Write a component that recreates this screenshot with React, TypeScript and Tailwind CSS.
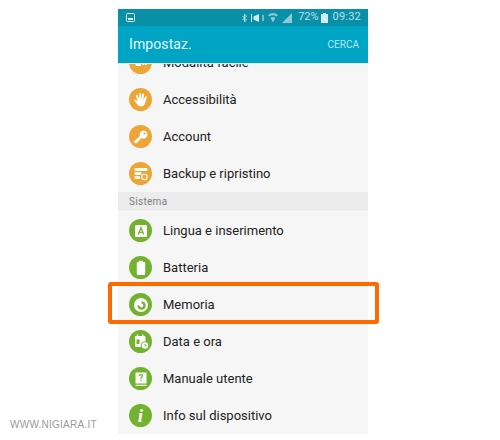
import React, { FC, ReactNode } from 'react';

const ORANGE = 'bg-[#eda636]';
const GREEN = 'bg-[#72b22e]';

const EasyIcon = () => (
  <svg viewBox="0 0 22 22" className="size-[22px]" fill="#fff">
    <rect x="5.500" y="8" width="5.500" height="6" rx="1" />
    <rect x="12.500" y="10.500" width="1.800" height="2.500" />
    <rect x="15" y="10.500" width="1.800" height="2.500" />
  </svg>
);

const HandIcon = () => (
  <svg viewBox="0 0 22 22" className="size-[22px]" fill="#fff">
    <path d="M7.200 11 6 6.800a.9.900 0 0 1 1.700-.5L9 10h.3V4.800a.9.900 0 0 1 1.800 0V10h.3l.9-4.700a.9.900 0 0 1 1.800.3L13.400 10.800h.3l1.500-3.200a.9.900 0 0 1 1.600.7l-1.500 5.200c-.7 2.600-2 4-4.300 4-2 0-3-.9-4-2.500L4.500 12c-.6-1 .7-1.900 1.500-1L7.500 12.600z" />
  </svg>
);

const KeyIcon = () => (
  <svg viewBox="0 0 22 22" className="size-[22px]" fill="#fff">
    <path d="M13.500 4.500a4 4 0 1 1-1.900 7.500l-5 5.200-2.100-.3v-1.900l5.400-5.100a4 4 0 0 1 3.600-5.400z" />
    <circle cx="14.500" cy="7.500" r="1.100" fill="#eda636" />
  </svg>
);

const BackupIcon = () => (
  <svg viewBox="0 0 22 22" className="size-[22px]" fill="none">
    <rect x="4.500" y="5" width="13" height="3" rx="1" fill="#fff" />
    <rect x="4.500" y="9.300" width="7" height="2.600" rx=".8" fill="#fff" />
    <rect x="4.500" y="13.300" width="5.500" height="2.600" rx=".8" fill="#fff" />
    <circle cx="14.500" cy="14" r="2.700" stroke="#fff" strokeWidth="1.100" />
  </svg>
);

const LanguageIcon = () => (
  <svg viewBox="0 0 22 22" className="size-[22px]">
    <rect x="5" y="5" width="12" height="12" rx="1.200" fill="#fff" />
    <path d="M8.300 14.500 11 7.500l2.700 7M9.200 12.300h3.600" stroke="#72b22e" strokeWidth="1.300" fill="none" />
  </svg>
);

const BatteryIcon = () => (
  <svg viewBox="0 0 22 22" className="size-[22px]" fill="#fff">
    <rect x="9" y="3.800" width="4" height="2" rx=".5" />
    <rect x="6.800" y="5" width="8.400" height="13" rx="1.200" />
  </svg>
);

const StorageIcon = () => (
  <svg viewBox="0 0 22 22" className="size-[22px]">
    <circle cx="11" cy="11" r="7" fill="#fff" />
    <circle cx="11.500" cy="11.500" r="4.200" fill="#72b22e" />
    <path d="M11.500 11.500H6.800A4.700 4.700 0 0 1 11.500 6.800z" fill="#fff" />
    <circle cx="11.500" cy="11.500" r="1.900" fill="#fff" />
  </svg>
);

const CalendarIcon = () => (
  <svg viewBox="0 0 22 22" className="size-[22px]" fill="#fff">
    <rect x="5" y="5" width="10.500" height="11" rx="1" />
    <rect x="6.800" y="3.500" width="1.400" height="2.500" />
    <rect x="12" y="3.500" width="1.400" height="2.500" />
    <rect x="6.500" y="8.500" width="3" height="4.500" fill="#72b22e" />
    <circle cx="15" cy="14.500" r="3.800" stroke="#72b22e" strokeWidth=".9" />
    <path d="M15 12.800v1.900h1.500" stroke="#72b22e" strokeWidth="1" fill="none" />
  </svg>
);

const ManualIcon = () => (
  <svg viewBox="0 0 22 22" className="size-[22px]">
    <rect x="5.500" y="4.500" width="11" height="11" fill="#fff" />
    <path d="M5.500 17.300h11" stroke="#fff" strokeWidth="1.100" />
    <text x="11" y="13.300" textAnchor="middle" fontSize="9" fontWeight="700" fontFamily="Roboto, sans-serif" fill="#72b22e">?</text>
  </svg>
);

const InfoIcon = () => (
  <span className="font-['Liberation_Serif',serif] text-[19px] leading-none font-bold italic text-white">i</span>
);

const MiniPicture = () => (
  <svg viewBox="0 0 9 9" className="size-[9px]" fill="none">
    <rect x=".5" y=".5" width="8" height="8" rx="1" stroke="#d8eef2" />
    <rect x="2" y="5" width="5" height="2" fill="#d8eef2" />
  </svg>
);

interface RowProps {
  icon: ReactNode
  label: string
  color: string
  className?: string
}

const Row: FC<RowProps> = ({ icon, label, color, className }) => (
  <div className={`flex h-[37px] items-center pl-[11px] ${className ?? ''}`}>
    <div className={`flex size-[23px] items-center justify-center rounded-full ${color}`}>{icon}</div>
    <span className="ml-[11px] text-[13px] text-[#222]">{label}</span>
  </div>
);

const StatusBar = () => (
  <div className="flex h-[17px] items-center bg-[#0a8fa8] pl-[8px] pr-[7px] text-[11px] text-[#b9e0e8]">
    <MiniPicture />
    <div className="ml-auto flex items-center">
      <svg viewBox="0 0 6 11" className="h-[10px] w-[5px]" fill="none" stroke="#d4edf2" strokeWidth="1">
        <path d="M.5 3l5 5L3 10V1l2.500 2-5 5" />
      </svg>
      <svg viewBox="0 0 13 10" className="ml-[4px] h-[10px] w-[13px]" fill="#d4edf2">
        <path d="M0 1h1v8H0zM2.500 3.500 8 1v8L2.500 6.500zM11.500 2h1v6h-1z" />
      </svg>
      <svg viewBox="0 0 10 11" className="ml-[4px] h-[11px] w-[10px]" fill="#8fcbd7">
        <path d="M0 3Q5-1 10 3L8.800 4.500Q5 2 1.200 4.500zM2.500 5.800q2.500-1.600 5 0L5 10.500z" />
      </svg>
      <svg viewBox="0 0 10 10" className="ml-[4px] size-[10px]" fill="#8fcbd7">
        <path d="M0 10 10 0v10z" />
      </svg>
      <span className="ml-[6px]">72%</span>
      <svg viewBox="0 0 7 10" className="ml-[2px] h-[10px] w-[7px]" fill="#d4edf2">
        <path d="M2 0h3v1h2v9H0V1h2z" />
      </svg>
      <span className="ml-[5px] tracking-[0.2px]">09:32</span>
    </div>
  </div>
);

export default function App() {
  return (
    <div className="relative h-[440px] w-[500px] overflow-hidden bg-white font-['Roboto',sans-serif]">
      <div className="ml-[118px] mt-[9px] flex h-[425px] w-[250px] flex-col bg-[#f6f6f6]">
        <StatusBar />
        <div className="flex h-[38px] items-center justify-between border-b border-[#d9f0f5] bg-[#00a5c5] pl-[11px] pr-[9px]">
          <span className="text-[14px] tracking-[0.1px] text-[#e4f6fa]">Impostaz.</span>
          <span className="text-[10px] text-[#b4e8f2]">CERCA</span>
        </div>
        <div className="flex-1 overflow-hidden">
          <Row className="-mt-[20px]" icon={<EasyIcon />} label="Modalità facile" color={ORANGE} />
          <Row icon={<HandIcon />} label="Accessibilità" color={ORANGE} />
          <Row icon={<KeyIcon />} label="Account" color={ORANGE} />
          <Row icon={<BackupIcon />} label="Backup e ripristino" color={ORANGE} />
          <div className="flex h-[20px] items-center border-b border-[#f8f8f8] bg-[#ececec] pl-[11px] text-[10px] tracking-[0.3px] text-[#7d7d7d]">Sistema</div>
          <Row icon={<LanguageIcon />} label="Lingua e inserimento" color={GREEN} />
          <Row icon={<BatteryIcon />} label="Batteria" color={GREEN} />
          <Row icon={<StorageIcon />} label="Memoria" color={GREEN} />
          <Row icon={<CalendarIcon />} label="Data e ora" color={GREEN} />
          <Row icon={<ManualIcon />} label="Manuale utente" color={GREEN} />
          <Row icon={<InfoIcon />} label="Info sul dispositivo" color={GREEN} />
        </div>
      </div>
      {/* evidenziazione sopra la riga Memoria */}
      <div className="absolute left-[108px] top-[282px] h-[42px] w-[271px] rounded-[3px] border-[4px] border-[#ff6a00]" />
      <div className="absolute left-[10px] top-[417px] font-['Liberation_Sans',sans-serif] text-[10px] tracking-[0.25px] text-[#9a9a9a]">WWW.NIGIARA.IT</div>
    </div>
  );
}
